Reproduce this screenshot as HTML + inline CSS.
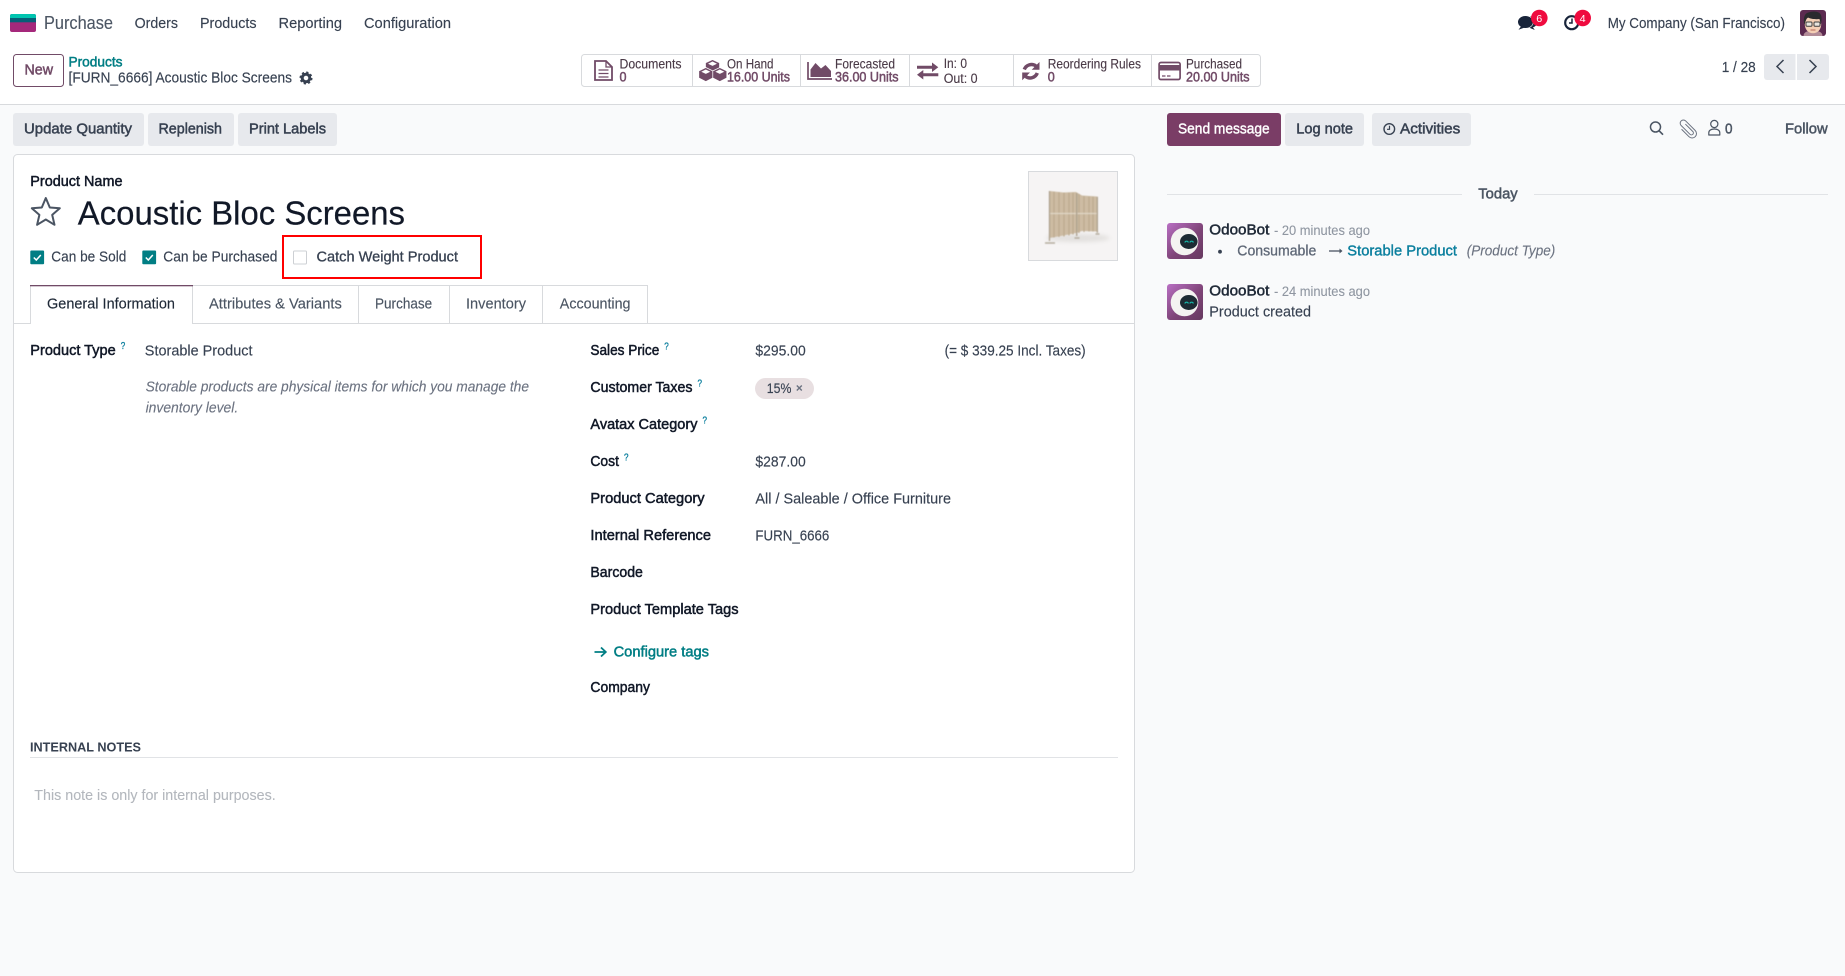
<!DOCTYPE html>
<html lang="en">
<head>
<meta charset="utf-8">
<title>Acoustic Bloc Screens</title>
<style>
html,body{margin:0;padding:0;background:#f9fafb;width:1845px;height:976px;overflow:hidden}
svg{display:block}
text{font-family:"Liberation Sans",sans-serif;font-size:15px;fill:#374151;stroke:#374151;stroke-width:.14}
text[style]{stroke:none}
.m{stroke:#374151;stroke-width:.5}
.lb{fill:#111827;stroke:#111827;stroke-width:.5}
.st{font-size:13.5px;fill:#4a3a47;stroke:#4a3a47;stroke-width:.12}
.sv{font-size:13.5px;fill:#714b67;stroke:#714b67;stroke-width:.5}
.q{font-size:10px;fill:#0b7f9e;stroke:#0b7f9e;stroke-width:.3}
.i{font-style:italic;fill:#6b7280;stroke:#6b7280;stroke-width:.12}
.tab{fill:#4b5563;stroke:#4b5563;stroke-width:.14}
</style>
</head>
<body>
<svg width="1845" height="976" viewBox="0 0 1845 976" xmlns="http://www.w3.org/2000/svg">
<defs>
<linearGradient id="bot" x1="0" y1="0" x2="1" y2="1"><stop offset="0" stop-color="#b96fc4"/><stop offset=".55" stop-color="#7f4478"/><stop offset="1" stop-color="#66395f"/></linearGradient>
<filter id="soft" x="-10%" y="-10%" width="120%" height="120%"><feGaussianBlur stdDeviation=".55"/></filter>
<filter id="softer" x="-20%" y="-50%" width="140%" height="200%"><feGaussianBlur stdDeviation="2"/></filter>
</defs>
<rect width="1845" height="976" fill="#f9fafb"/>
<rect width="1845" height="104" fill="#fff"/>
<rect y="104" width="1845" height="1" fill="#d8dadd"/>

<!-- logo -->
<rect x="10" y="14" width="26" height="18" rx="2" fill="#a5287b"/>
<path d="M10 16a2 2 0 0 1 2-2h22a2 2 0 0 1 2 2v2H10z" fill="#00c5b0"/>
<rect x="10" y="18" width="26" height="4.300" fill="#075f77"/>

<text x="44" y="29" style="font-size:18px;fill:#4b5563;stroke:#4b5563;stroke-width:.12" textLength="69" lengthAdjust="spacingAndGlyphs">Purchase</text>
<text x="134.600" y="28" textLength="43.400" lengthAdjust="spacingAndGlyphs">Orders</text>
<text x="200" y="28" textLength="56.500" lengthAdjust="spacingAndGlyphs">Products</text>
<text x="278.500" y="28" textLength="63.500" lengthAdjust="spacingAndGlyphs">Reporting</text>
<text x="364" y="28" textLength="87" lengthAdjust="spacingAndGlyphs">Configuration</text>

<!-- systray -->
<ellipse cx="1531" cy="22" rx="6.500" ry="5.500" fill="#18243a"/>
<path d="M1532 26l2.800 4-6-2.500z" fill="#18243a"/>
<ellipse cx="1525.500" cy="22" rx="7.800" ry="6.300" fill="#18243a" stroke="#fff" stroke-width=".6"/>
<path d="M1521 26.500l-2.500 3.300 5.500-2z" fill="#18243a"/>
<circle cx="1539.300" cy="18" r="8.300" fill="#ef0b3f"/>
<text x="1536.300" y="22" style="font-size:10.500px;fill:#fff" textLength="6" lengthAdjust="spacingAndGlyphs">6</text>
<circle cx="1571.700" cy="22.700" r="6.500" fill="none" stroke="#18243a" stroke-width="2.200"/>
<path d="M1572 18.500v4.500h-3" fill="none" stroke="#18243a" stroke-width="1.500"/>
<circle cx="1582.700" cy="18" r="8.300" fill="#ef0b3f"/>
<text x="1579.700" y="22" style="font-size:10.500px;fill:#fff" textLength="6" lengthAdjust="spacingAndGlyphs">4</text>
<text x="1607.700" y="28" textLength="177.300" lengthAdjust="spacingAndGlyphs">My Company (San Francisco)</text>

<!-- user avatar -->
<rect x="1800" y="10" width="26" height="26" rx="3" fill="#5c2a50"/>
<path d="M1803.500 36c0-3 2.500-4.500 5-5h9c2.500.5 5 2 5 5z" fill="#b38c98"/>
<ellipse cx="1813" cy="24.500" rx="8.200" ry="8.800" fill="#f5cfb5"/>
<path d="M1804.500 24.500c-1.800-7 .5-11.500 4-12 3.500-1.800 9.500-1.200 11.500 1 2 2.300 2 7 .8 11l-1.300-5.500c-3.500.5-9 0-11.500-1.500l-1.500 1z" fill="#2b2a2e"/>
<rect x="1806" y="22" width="6" height="4.300" rx="1" fill="#e8e4de" stroke="#3f3f3f" stroke-width="1"/>
<rect x="1814" y="22" width="6" height="4.300" rx="1" fill="#e8e4de" stroke="#3f3f3f" stroke-width="1"/>
<path d="M1810.500 30h5" stroke="#b86a5c" stroke-width="1"/>

<!-- control panel -->
<rect x="13.500" y="54.500" width="50" height="32" rx="3" fill="#fff" stroke="#714b67"/>
<text x="24.500" y="74.500" class="m" style="fill:#714b67;stroke:#714b67;stroke-width:.5" textLength="28.500" lengthAdjust="spacingAndGlyphs">New</text>
<text x="68.500" y="66.500" style="fill:#017e84;stroke:#017e84;stroke-width:.5;font-size:14px" textLength="54" lengthAdjust="spacingAndGlyphs">Products</text>
<text x="68.500" y="82.500" textLength="223.500" lengthAdjust="spacingAndGlyphs">[FURN_6666] Acoustic Bloc Screens</text>
<circle cx="306" cy="78" r="3.800" fill="none" stroke="#374151" stroke-width="3"/>
<circle cx="306" cy="78" r="5.600" fill="none" stroke="#374151" stroke-width="1.800" stroke-dasharray="2.200 2.200"/>

<!-- stat bar -->
<rect x="581.500" y="54.500" width="679" height="32" rx="3" fill="#fff" stroke="#d8dadd"/>
<path d="M692.500 55v31M800.500 55v31M909.500 55v31M1013.500 55v31M1151.500 55v31" stroke="#d8dadd"/>
<!-- doc -->
<path d="M595 61h11l6 6v13h-17z" fill="none" stroke="#714b67" stroke-width="1.800"/>
<path d="M606 61v6h6M598.500 70h10M598.500 73.500h10M598.500 77h10" fill="none" stroke="#714b67" stroke-width="1.300"/>
<text x="619.500" y="68.500" class="st" textLength="62" lengthAdjust="spacingAndGlyphs">Documents</text>
<text x="619.500" y="81.500" class="sv" textLength="7" lengthAdjust="spacingAndGlyphs">0</text>
<!-- cubes -->
<g fill="#714b67" stroke="#fff" stroke-width=".7">
<path d="M712.500 59.500l7 3.300v7.400l-7 3.500-7-3.500v-7.400z"/>
<path d="M705.800 67.500l7 3.400v7l-7 3.600-7-3.600v-7z"/>
<path d="M719.800 67.500l7 3.400v7l-7 3.600-7-3.600v-7z"/>
</g>
<path d="M712.500 61.500l4.500 2.200-4.500 2.200-4.500-2.200zM705.800 69.500l4.500 2.200-4.500 2.200-4.500-2.200zM719.800 69.500l4.500 2.200-4.500 2.200-4.500-2.200z" fill="#fff"/>
<text x="727" y="68.500" class="st" textLength="46.500" lengthAdjust="spacingAndGlyphs">On Hand</text>
<text x="727" y="81.500" class="sv" textLength="63" lengthAdjust="spacingAndGlyphs">16.00 Units</text>
<!-- area -->
<path d="M808 62v17h24" fill="none" stroke="#714b67" stroke-width="1.700"/>
<path d="M810.500 77v-7.500l5-6.500 5.500 5.500 4.500-3.500 5.500 6v6z" fill="#714b67"/>
<text x="835" y="68.500" class="st" textLength="60" lengthAdjust="spacingAndGlyphs">Forecasted</text>
<text x="835" y="81.500" class="sv" textLength="63.500" lengthAdjust="spacingAndGlyphs">36.00 Units</text>
<!-- exchange -->
<path d="M917 65.800h15v-3.300l6.300 4.800-6.300 4.700v-3.200h-15zM938.300 73.300h-15V70l-6.300 4.800 6.300 4.700v-3.200h15z" fill="#714b67"/>
<text x="943.700" y="68" class="st" textLength="23.300" lengthAdjust="spacingAndGlyphs">In: 0</text>
<text x="943.700" y="83" class="st" textLength="33.900" lengthAdjust="spacingAndGlyphs">Out: 0</text>
<!-- refresh -->
<path d="M1024.300 69.500a7.700 7.700 0 0 1 11.700-3.500M1037.300 73a7.700 7.700 0 0 1-11.700 3.500" fill="none" stroke="#714b67" stroke-width="3.500"/>
<path d="M1039.500 62v7.800h-7.800zM1022.200 80.300v-7.800h7.800z" fill="#714b67"/>
<text x="1047.700" y="68.500" class="st" textLength="93.300" lengthAdjust="spacingAndGlyphs">Reordering Rules</text>
<text x="1047.700" y="81.500" class="sv" textLength="7" lengthAdjust="spacingAndGlyphs">0</text>
<!-- card -->
<rect x="1159.100" y="62.500" width="21" height="17" rx="1.800" fill="none" stroke="#714b67" stroke-width="1.700"/>
<rect x="1159" y="65" width="21" height="5.500" fill="#714b67"/>
<path d="M1162 76h3.500M1167 76h3.500" stroke="#714b67" stroke-width="1.200"/>
<text x="1186" y="68.500" class="st" textLength="56" lengthAdjust="spacingAndGlyphs">Purchased</text>
<text x="1186" y="81.500" class="sv" textLength="63.500" lengthAdjust="spacingAndGlyphs">20.00 Units</text>

<!-- pager -->
<text x="1721.700" y="72" textLength="34" lengthAdjust="spacingAndGlyphs">1 / 28</text>
<path d="M1767 54h28.500v26H1767a3 3 0 0 1-3-3V57a3 3 0 0 1 3-3z" fill="#e7e9ed"/>
<path d="M1797 54h29a3 3 0 0 1 3 3v20a3 3 0 0 1-3 3h-29z" fill="#e7e9ed"/>
<path d="M1783.500 60l-6.500 6.500 6.500 6.500M1809.500 60l6.500 6.500-6.500 6.500" fill="none" stroke="#374151" stroke-width="1.500"/>

<!-- action buttons -->
<rect x="13" y="113" width="131" height="33" rx="3" fill="#e7e9ed"/>
<rect x="148" y="113" width="86" height="33" rx="3" fill="#e7e9ed"/>
<rect x="238" y="113" width="99" height="33" rx="3" fill="#e7e9ed"/>
<text x="24" y="133.500" class="m" textLength="108" lengthAdjust="spacingAndGlyphs">Update Quantity</text>
<text x="158.500" y="133.500" class="m" textLength="63.500" lengthAdjust="spacingAndGlyphs">Replenish</text>
<text x="249" y="133.500" class="m" textLength="77" lengthAdjust="spacingAndGlyphs">Print Labels</text>

<!-- chatter top -->
<rect x="1167" y="113" width="114" height="33" rx="3" fill="#7a3d66"/>
<text x="1178" y="133.500" style="fill:#fff;stroke:#fff;stroke-width:.4" textLength="91.700" lengthAdjust="spacingAndGlyphs">Send message</text>
<rect x="1285" y="113" width="79" height="33" rx="3" fill="#e7e9ed"/>
<text x="1296.300" y="133.500" class="m" textLength="56.700" lengthAdjust="spacingAndGlyphs">Log note</text>
<rect x="1372" y="113" width="99" height="33" rx="3" fill="#e7e9ed"/>
<circle cx="1389.300" cy="129" r="5.300" fill="none" stroke="#374151" stroke-width="1.400"/>
<path d="M1389.500 125.800v3.500h-2.500" fill="none" stroke="#374151" stroke-width="1.200"/>
<text x="1400" y="133.500" class="m" textLength="60.300" lengthAdjust="spacingAndGlyphs">Activities</text>
<circle cx="1655.500" cy="127" r="5" fill="none" stroke="#4b5563" stroke-width="1.500"/>
<path d="M1659 130.700l4 4" stroke="#4b5563" stroke-width="1.700"/>
<g transform="rotate(-45 1687.500 129)"><path d="M1689.500 124V134.500a2 2 0 0 1-4 0V122a3.200 3.200 0 0 1 6.400 0V135.500a4.400 4.400 0 0 1-8.800 0V125" fill="none" stroke="#6b7280" stroke-width="1"/></g>
<circle cx="1714.300" cy="124" r="3.600" fill="none" stroke="#4b5563" stroke-width="1.200"/>
<path d="M1708.800 135v-2.300c0-2.200 2.200-3.700 5.500-3.700s5.500 1.500 5.500 3.700v2.300z" fill="none" stroke="#4b5563" stroke-width="1.200" stroke-linejoin="round"/>
<text x="1725" y="133.500" class="m" style="fill:#4b5563;stroke:#4b5563;stroke-width:.5" textLength="7.500" lengthAdjust="spacingAndGlyphs">0</text>
<text x="1785" y="133.500" class="m" style="fill:#4b5563;stroke:#4b5563;stroke-width:.5" textLength="42.700" lengthAdjust="spacingAndGlyphs">Follow</text>

<!-- chatter messages -->
<rect x="1167" y="194" width="295" height="1" fill="#e1e3e6"/>
<rect x="1534" y="194" width="294" height="1" fill="#e1e3e6"/>
<text x="1478.300" y="198.700" class="m" style="fill:#4b5563;stroke:#4b5563;stroke-width:.5" textLength="39.400" lengthAdjust="spacingAndGlyphs">Today</text>

<g>
<rect x="1167" y="223" width="36" height="36" rx="3" fill="url(#bot)"/>
<circle cx="1184.500" cy="241.500" r="13.800" fill="#f4f3f1"/>
<ellipse cx="1188.800" cy="241.500" rx="8.800" ry="7.500" fill="#1d2b33"/>
<path d="M1184.800 242.500a1.900 1.900 0 0 1 3.600 0M1189.800 242.500a1.900 1.900 0 0 1 3.600 0" fill="none" stroke="#16b5a8" stroke-width="1.200"/>
</g>
<g transform="translate(0 61)">
<rect x="1167" y="223" width="36" height="36" rx="3" fill="url(#bot)"/>
<circle cx="1184.500" cy="241.500" r="13.800" fill="#f4f3f1"/>
<ellipse cx="1188.800" cy="241.500" rx="8.800" ry="7.500" fill="#1d2b33"/>
<path d="M1184.800 242.500a1.900 1.900 0 0 1 3.600 0M1189.800 242.500a1.900 1.900 0 0 1 3.600 0" fill="none" stroke="#16b5a8" stroke-width="1.200"/>
</g>
<text x="1209.300" y="234.300" class="lb" style="fill:#1f2937;stroke:#1f2937;stroke-width:.5" textLength="60" lengthAdjust="spacingAndGlyphs">OdooBot</text>
<text x="1274" y="235" style="font-size:13.500px;fill:#8f96a1;stroke:#8f96a1;stroke-width:.1" textLength="96" lengthAdjust="spacingAndGlyphs">- 20 minutes ago</text>
<circle cx="1220" cy="251.700" r="1.900" fill="#374151"/>
<text x="1237.300" y="255.500" class="m" style="fill:#5f6877;stroke:#5f6877;stroke-width:.3" textLength="79" lengthAdjust="spacingAndGlyphs">Consumable</text>
<path d="M1329 251h12" stroke="#4b5563" stroke-width="1.300"/><path d="M1339.500 248.500l3 2.500-3 2.500z" fill="#4b5563"/>
<text x="1347.300" y="255.500" style="fill:#0b7f9e;stroke:#0b7f9e;stroke-width:.4" textLength="109.700" lengthAdjust="spacingAndGlyphs">Storable Product</text>
<text x="1466.700" y="255.500" class="i" textLength="88.600" lengthAdjust="spacingAndGlyphs">(Product Type)</text>
<text x="1209.300" y="295.300" class="lb" style="fill:#1f2937;stroke:#1f2937;stroke-width:.5" textLength="60" lengthAdjust="spacingAndGlyphs">OdooBot</text>
<text x="1274" y="296" style="font-size:13.500px;fill:#8f96a1;stroke:#8f96a1;stroke-width:.1" textLength="96" lengthAdjust="spacingAndGlyphs">- 24 minutes ago</text>
<text x="1209.300" y="316.500" textLength="101.700" lengthAdjust="spacingAndGlyphs">Product created</text>

<!-- form sheet -->
<rect x="13.500" y="154.500" width="1121" height="718" rx="4" fill="#fff" stroke="#d8dadd"/>
<text x="30.300" y="186" class="lb" textLength="92.200" lengthAdjust="spacingAndGlyphs">Product Name</text>
<path d="M45.800 198l4 9.500 10 .8-7.600 6.600 2.300 9.900-8.700-5.300-8.700 5.300 2.300-9.900-7.600-6.600 10-.8z" fill="none" stroke="#4b5563" stroke-width="2" stroke-linejoin="round"/>
<text x="77.800" y="224.700" style="font-size:33px;fill:#111827;stroke:#111827;stroke-width:.2" textLength="327.200" lengthAdjust="spacingAndGlyphs">Acoustic Bloc Screens</text>

<!-- product image -->
<rect x="1028.500" y="171.500" width="89" height="89" fill="#f6f4f4" stroke="#d8dadd"/>
<ellipse cx="1078" cy="238" rx="32" ry="4" fill="#e2e0de" filter="url(#softer)"/>
<g filter="url(#soft)">
<path d="M1049.500 191l14 1.500 12.500-.5 6 3.500 15 1v35l-15-.5-6 2-12.500 2.500-14 2.500z" fill="#cdbca3"/>
<path d="M1054 191.500v46M1059 192v45M1064 192.500v44M1069 192.500v43M1073 192.500v42M1079 194v39M1084 196v36M1089 196.500v35M1093 196.500v35" stroke="#bcaa8f" stroke-width="1.200"/>
<path d="M1049.500 213.500h47.500" stroke="#e0d6c6" stroke-width="1.300"/>
<path d="M1049.500 191v50M1097.300 196.700v36M1076.700 193v43" stroke="#aca08d" stroke-width="1.300"/>
<path d="M1045 243h10M1074.500 238h5M1095.500 234h4" stroke="#b5ad9f" stroke-width="1.500"/>
</g>

<!-- checkboxes -->
<rect x="30.300" y="250.500" width="13.800" height="13.800" rx="1" fill="#017e84"/>
<path d="M33.800 257.500l2.500 2.500 4.500-5" fill="none" stroke="#fff" stroke-width="1.500"/>
<text x="51.300" y="261.700" textLength="75" lengthAdjust="spacingAndGlyphs">Can be Sold</text>
<rect x="142.300" y="250.500" width="13.800" height="13.800" rx="1" fill="#017e84"/>
<path d="M145.800 257.500l2.500 2.500 4.500-5" fill="none" stroke="#fff" stroke-width="1.500"/>
<text x="163.300" y="261.700" textLength="114.100" lengthAdjust="spacingAndGlyphs">Can be Purchased</text>
<rect x="293.500" y="251" width="13" height="13" rx="1" fill="#fff" stroke="#cdd0d4"/>
<text x="316.500" y="261.700" class="m" style="fill:#374151;stroke:#374151;stroke-width:.3" textLength="141.500" lengthAdjust="spacingAndGlyphs">Catch Weight Product</text>
<rect x="283" y="236" width="198" height="42" fill="none" stroke="#f00" stroke-width="2"/>

<!-- tabs -->
<rect x="14" y="323" width="1120" height="1" fill="#d8dadd"/>
<path d="M192.500 285.500H647.500V323M358.500 285.500V323M449.500 285.500V323M542.500 285.500V323" fill="none" stroke="#d8dadd"/>
<rect x="30.500" y="285" width="162" height="39.500" fill="#fff"/>
<path d="M30.500 285.500V324M192.500 285.500V324" stroke="#d8dadd" fill="none"/>
<rect x="30" y="285" width="163" height="1.300" fill="#714b67"/>
<text x="47" y="308.500" style="fill:#1f2937;stroke:#1f2937;stroke-width:.14" textLength="128" lengthAdjust="spacingAndGlyphs">General Information</text>
<text x="209" y="308.500" class="tab" textLength="132.800" lengthAdjust="spacingAndGlyphs">Attributes &amp; Variants</text>
<text x="375" y="308.500" class="tab" textLength="57.200" lengthAdjust="spacingAndGlyphs">Purchase</text>
<text x="466" y="308.500" class="tab" textLength="60" lengthAdjust="spacingAndGlyphs">Inventory</text>
<text x="559.800" y="308.500" class="tab" textLength="70.700" lengthAdjust="spacingAndGlyphs">Accounting</text>

<!-- left column -->
<text x="30.300" y="355" class="lb" textLength="85.400" lengthAdjust="spacingAndGlyphs">Product Type</text>
<text x="120.800" y="349" class="q" textLength="4.500" lengthAdjust="spacingAndGlyphs">?</text>
<text x="144.800" y="355.500" textLength="107.700" lengthAdjust="spacingAndGlyphs">Storable Product</text>
<text x="145.600" y="391.500" class="i" textLength="383.400" lengthAdjust="spacingAndGlyphs">Storable products are physical items for which you manage the</text>
<text x="145.600" y="412.300" class="i" textLength="92.600" lengthAdjust="spacingAndGlyphs">inventory level.</text>

<!-- right column -->
<text x="590.400" y="355" class="lb" textLength="68.900" lengthAdjust="spacingAndGlyphs">Sales Price</text>
<text x="664.300" y="349.300" class="q" textLength="4.500" lengthAdjust="spacingAndGlyphs">?</text>
<text x="755.400" y="355.500" textLength="50.300" lengthAdjust="spacingAndGlyphs">$295.00</text>
<text x="944.600" y="355.500" textLength="141.100" lengthAdjust="spacingAndGlyphs">(= $ 339.25 Incl. Taxes)</text>

<text x="590.400" y="392" class="lb" textLength="102.100" lengthAdjust="spacingAndGlyphs">Customer Taxes</text>
<text x="697.500" y="386.700" class="q" textLength="4.500" lengthAdjust="spacingAndGlyphs">?</text>
<rect x="755" y="378" width="59" height="21" rx="10.500" fill="#e8dfe1"/>
<text x="766.800" y="393" style="font-size:14px;fill:#374151;stroke:#374151;stroke-width:.14" textLength="24.600" lengthAdjust="spacingAndGlyphs">15%</text>
<path d="M796.800 385.500l5 5M801.800 385.500l-5 5" stroke="#6b7280" stroke-width="1.400"/>

<text x="590.400" y="429" class="lb" textLength="107.100" lengthAdjust="spacingAndGlyphs">Avatax Category</text>
<text x="702.500" y="423.700" class="q" textLength="4.500" lengthAdjust="spacingAndGlyphs">?</text>

<text x="590.400" y="466" class="lb" textLength="28.600" lengthAdjust="spacingAndGlyphs">Cost</text>
<text x="624" y="460.700" class="q" textLength="4.500" lengthAdjust="spacingAndGlyphs">?</text>
<text x="755.400" y="466.500" textLength="50.300" lengthAdjust="spacingAndGlyphs">$287.00</text>

<text x="590.400" y="503" class="lb" textLength="114.200" lengthAdjust="spacingAndGlyphs">Product Category</text>
<text x="755.400" y="503.500" textLength="195.600" lengthAdjust="spacingAndGlyphs">All / Saleable / Office Furniture</text>

<text x="590.400" y="540" class="lb" textLength="120.600" lengthAdjust="spacingAndGlyphs">Internal Reference</text>
<text x="755.400" y="540.500" textLength="73.900" lengthAdjust="spacingAndGlyphs">FURN_6666</text>

<text x="590.400" y="577" class="lb" textLength="52.500" lengthAdjust="spacingAndGlyphs">Barcode</text>
<text x="590.400" y="614" class="lb" textLength="148.200" lengthAdjust="spacingAndGlyphs">Product Template Tags</text>

<path d="M594.500 652h11M601 647.500l4.800 4.500-4.800 4.500" fill="none" stroke="#017e84" stroke-width="1.800"/>
<text x="613.600" y="656.500" style="fill:#017e84;stroke:#017e84;stroke-width:.5" textLength="95.400" lengthAdjust="spacingAndGlyphs">Configure tags</text>

<text x="590.400" y="692" class="lb" textLength="59.600" lengthAdjust="spacingAndGlyphs">Company</text>

<!-- internal notes -->
<text x="30" y="751.500" style="font-size:13px;font-weight:bold;fill:#374151" textLength="111" lengthAdjust="spacingAndGlyphs">INTERNAL NOTES</text>
<rect x="30" y="757" width="1088" height="1" fill="#e1e3e6"/>
<text x="34.300" y="800" style="fill:#b3b7bd;stroke:#b3b7bd;stroke-width:.1" textLength="241.400" lengthAdjust="spacingAndGlyphs">This note is only for internal purposes.</text>
</svg>
</body>
</html>
